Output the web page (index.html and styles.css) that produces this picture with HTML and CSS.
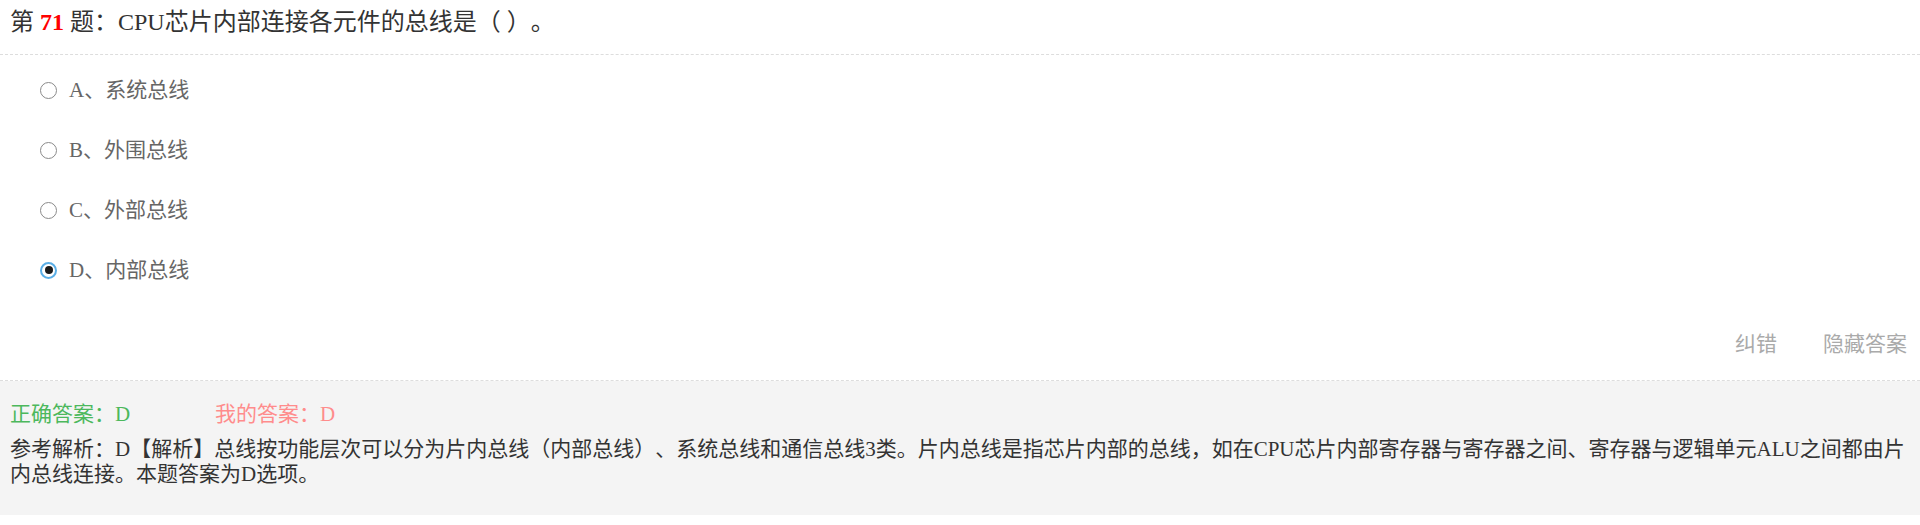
FILE: index.html
```html
<!DOCTYPE html>
<html lang="zh-CN">
<head>
    <meta charset="UTF-8">
    <meta name="viewport" content="width=device-width, initial-scale=1.0">
    <title>第71题</title>
    <link rel="stylesheet" href="styles.css">
</head>
<body>
<div class="question">
    <div class="q-title">第 <span class="q-num">71</span> 题：CPU芯片内部连接各元件的总线是（ ）。</div>

    <ul class="options">
        <li><label><input type="radio" name="q71" value="A"><span>A、系统总线</span></label></li>
        <li><label><input type="radio" name="q71" value="B"><span>B、外围总线</span></label></li>
        <li><label><input type="radio" name="q71" value="C"><span>C、外部总线</span></label></li>
        <li><label><input type="radio" name="q71" value="D" checked><span>D、内部总线</span></label></li>
    </ul>

    <div class="q-tools">
        <a href="#" class="tool-link">纠错</a>
        <a href="#" class="tool-link">隐藏答案</a>
    </div>

    <div class="answer-box">
        <div class="answer-row">
            <span class="right-answer">正确答案：D</span>
            <span class="my-answer">我的答案：D</span>
        </div>
        <p class="analysis">参考解析：D【解析】总线按功能层次可以分为片内总线（内部总线）、系统总线和通信总线3类。片内总线是指芯片内部的总线，如在CPU芯片内部寄存器与寄存器之间、寄存器与逻辑单元ALU之间都由片内总线连接。本题答案为D选项。</p>
    </div>
</div>
</body>
</html>
```

FILE: styles.css
```css
body {
    margin: 0;
    padding: 0;
    background: #fff;
    font-family: "Liberation Serif", "Noto Sans CJK SC", serif;
    color: #333;
    text-spacing-trim: space-all;
}
.question {
    padding-bottom: 9px;
}
.q-title {
    font-size: 24px;
    line-height: 44px;
    padding: 0 10px 10px;
    border-bottom: 1px dashed #ddd;
}
.q-num {
    color: #f00;
    font-weight: bold;
}
.options {
    list-style: none;
    margin: 0;
    padding: 5px 0 0 40px;
}
.options li {
    height: 60px;
    line-height: 60px;
    font-size: 21px;
    color: #666;
}
.options label {
    display: flex;
    align-items: center;
    cursor: pointer;
}
.options input {
    appearance: none;
    -webkit-appearance: none;
    width: 17px;
    height: 17px;
    margin: 0 12px 0 0;
    border: 1px solid #8a8a8a;
    border-radius: 50%;
    background: #fff;
    display: flex;
    align-items: center;
    justify-content: center;
}
.options input:checked {
    border: 2px solid #5aaee6;
}
.options input:checked::after {
    content: "";
    width: 8px;
    height: 8px;
    border-radius: 50%;
    background: #1a1a1a;
}
.q-tools {
    display: flex;
    justify-content: flex-end;
    gap: 46px;
    padding: 22px 13px 14px 0;
    line-height: 44px;
    border-bottom: 1px dashed #ddd;
}
.tool-link {
    font-size: 21px;
    color: #aaa;
    text-decoration: none;
}
.answer-box {
    background: #f4f4f4;
    padding: 18px 10px 28px;
    font-size: 21px;
}
.answer-row {
    line-height: 30px;
    display: flex;
}
.right-answer {
    color: #4cb85c;
    width: 205px;
}
.my-answer {
    color: #ff8c8c;
}
.analysis {
    margin: 8px 0 0;
    line-height: 25px;
}
```
